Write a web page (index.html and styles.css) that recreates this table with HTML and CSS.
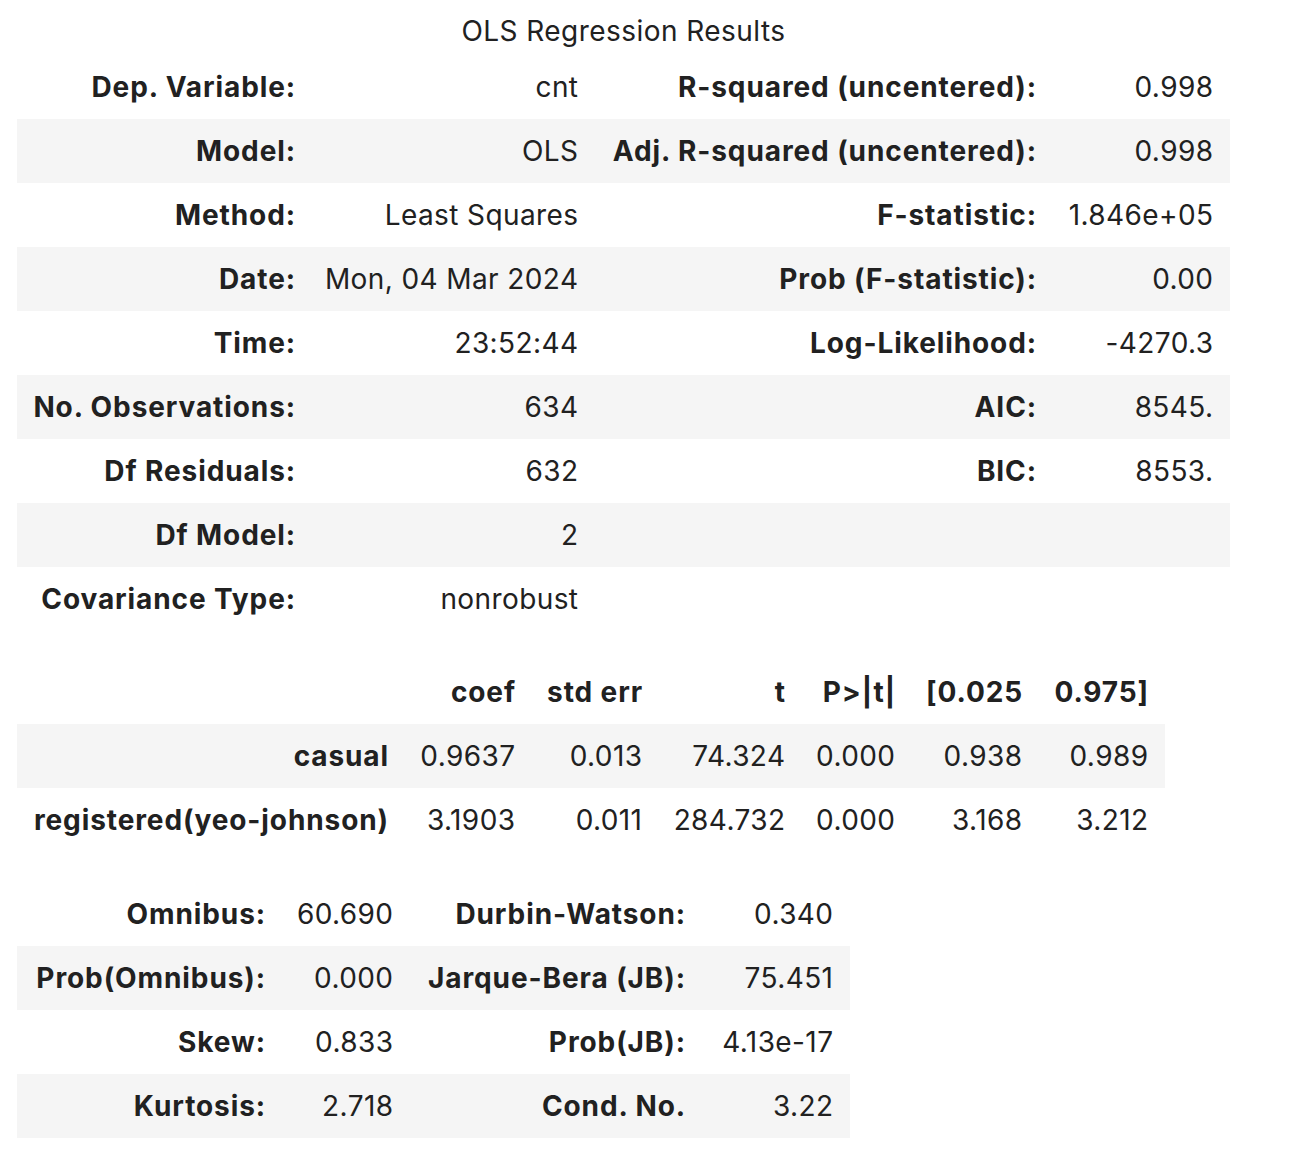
FILE: index.html
```html
<!DOCTYPE html>
<html>
<head>
<meta charset="utf-8">
<link rel="stylesheet" href="styles.css">
</head>
<body>
<div class="page">
<table class="simpletable t1 stripe-even">
<caption>OLS Regression Results</caption>
<colgroup><col class="c1a"><col class="c1b"><col class="c1c"><col class="c1d"></colgroup>
<tbody>
<tr><th>Dep. Variable:</th><td>cnt</td><th>R-squared (uncentered):</th><td>0.998</td></tr>
<tr><th>Model:</th><td>OLS</td><th>Adj. R-squared (uncentered):</th><td>0.998</td></tr>
<tr><th>Method:</th><td>Least Squares</td><th>F-statistic:</th><td>1.846e+05</td></tr>
<tr><th>Date:</th><td>Mon, 04 Mar 2024</td><th>Prob (F-statistic):</th><td>0.00</td></tr>
<tr><th>Time:</th><td>23:52:44</td><th>Log-Likelihood:</th><td>-4270.3</td></tr>
<tr><th>No. Observations:</th><td>634</td><th>AIC:</th><td>8545.</td></tr>
<tr><th>Df Residuals:</th><td>632</td><th>BIC:</th><td>8553.</td></tr>
<tr><th>Df Model:</th><td>2</td><th></th><td></td></tr>
<tr><th>Covariance Type:</th><td>nonrobust</td><th></th><td></td></tr>
</tbody>
</table>

<table class="simpletable t2 stripe-odd">
<colgroup><col class="c2a"><col class="c2b"><col class="c2c"><col class="c2d"><col class="c2e"><col class="c2f"><col class="c2g"></colgroup>
<thead>
<tr><th></th><th>coef</th><th>std err</th><th>t</th><th>P&gt;|t|</th><th>[0.025</th><th>0.975]</th></tr>
</thead>
<tbody>
<tr><th>casual</th><td>0.9637</td><td>0.013</td><td>74.324</td><td>0.000</td><td>0.938</td><td>0.989</td></tr>
<tr><th>registered(yeo-johnson)</th><td>3.1903</td><td>0.011</td><td>284.732</td><td>0.000</td><td>3.168</td><td>3.212</td></tr>
</tbody>
</table>

<table class="simpletable t3 stripe-even">
<colgroup><col class="c3a"><col class="c3b"><col class="c3c"><col class="c3d"></colgroup>
<tbody>
<tr><th>Omnibus:</th><td>60.690</td><th>Durbin-Watson:</th><td>0.340</td></tr>
<tr><th>Prob(Omnibus):</th><td>0.000</td><th>Jarque-Bera (JB):</th><td>75.451</td></tr>
<tr><th>Skew:</th><td>0.833</td><th>Prob(JB):</th><td>4.13e-17</td></tr>
<tr><th>Kurtosis:</th><td>2.718</td><th>Cond. No.</th><td>3.22</td></tr>
</tbody>
</table>
</div>
</body>
</html>
```
FILE: styles.css
```css
html, body {
  margin: 0;
  padding: 0;
  background: #ffffff;
}

body {
  font-family: Inter, "Noto Sans", "Liberation Sans", sans-serif;
  font-size: 28px;
  color: #212121;
}

.page {
  padding: 0 0 0 17px;
}

.simpletable {
  border-collapse: collapse;
  border-spacing: 0;
  table-layout: fixed;
}

.simpletable caption {
  height: 55px;
  padding-top: 8px;
  box-sizing: border-box;
  line-height: 47px;
  text-align: center;
  font-weight: 400;
  letter-spacing: 0.45px;
}

.simpletable th,
.simpletable td {
  height: 64px;
  box-sizing: border-box;
  text-align: right;
  vertical-align: middle;
  white-space: nowrap;
  line-height: 1;
}

.simpletable th {
  padding: 0 16px 0 12px;
  font-weight: 700;
  letter-spacing: 0.9px;
}

.simpletable td {
  padding: 0 16.6px 0 12px;
  font-weight: 400;
  letter-spacing: 0.4px;
}

.stripe-even tbody tr:nth-child(even),
.stripe-odd tbody tr:nth-child(odd) {
  background: #f5f5f5;
}

.t1 { width: 1213px; }
.c1a { width: 295px; }
.c1b { width: 283px; }
.c1c { width: 458px; }
.c1d { width: 177px; }

.t2 { width: 1148px; margin-top: 29px; }
.c2a { width: 388px; }
.c2b { width: 127px; }
.c2c { width: 127px; }
.c2d { width: 143px; }
.c2e { width: 110px; }
.c2f { width: 127px; }
.c2g { width: 126px; }

.t3 { width: 833px; margin-top: 30px; }
.c3a { width: 265px; }
.c3b { width: 128px; }
.c3c { width: 292px; }
.c3d { width: 148px; }
```
